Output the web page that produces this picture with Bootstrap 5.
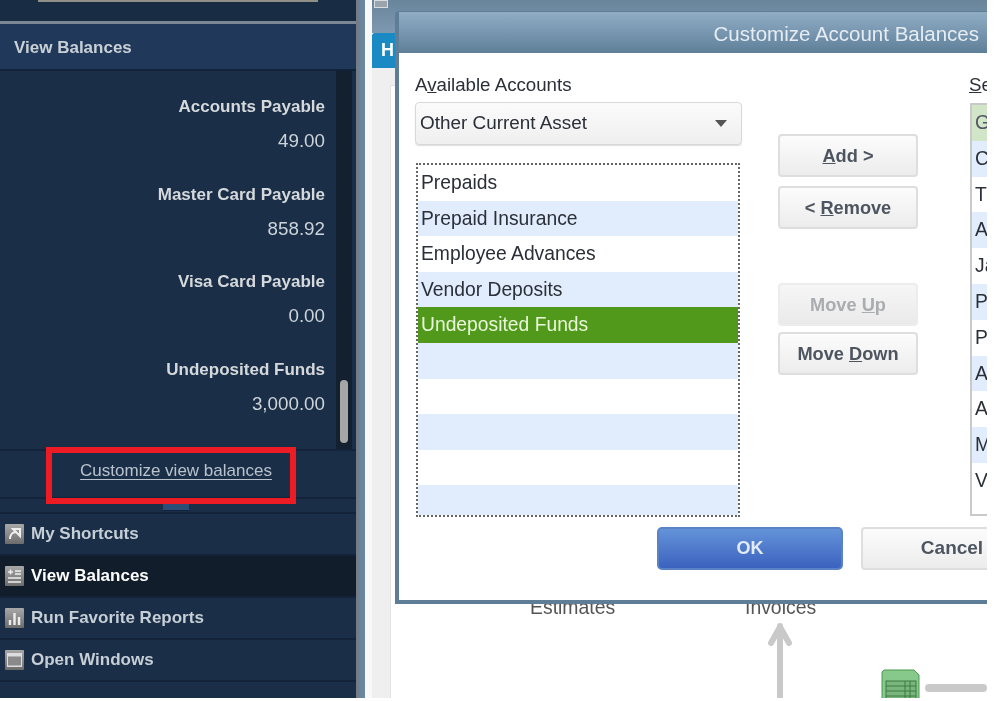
<!DOCTYPE html>
<html lang="en"><head><meta charset="utf-8"><title>Customize Account Balances</title>
<link href="https://cdn.jsdelivr.net/npm/bootstrap@5.3.0/dist/css/bootstrap.min.css" rel="stylesheet">
<style>
html,body{margin:0;background:#fff;height:100%;overflow:hidden}
body{font-family:"Liberation Sans",Arial,sans-serif}
.qb-app{width:987px;height:698px;position:relative;overflow:hidden;background:#fff;filter:blur(.45px)}
.qb-side{width:356px;background:#1a2e47;color:#d3d9df}
.qb-topstrip{height:21px;background:#182c44}
.qb-search{height:2px;margin:0 38px;background:#8f8f88}
.qb-rule{height:3px;background:#7b8795}
.qb-head{height:47px;background:#20385a;border-bottom:2px solid #13243a;font-size:17px;font-weight:700;padding:2px 0 0 14px;color:#c9d0d6}
.qb-scrollarea{height:380px;border-bottom:2px solid #12233a}
.qb-items{width:336px;padding:26px 11px 0 0}
.qb-item{text-align:right;height:87.5px}
.qb-label{font-weight:700;font-size:17px;line-height:20px;color:#d5d9dc}
.qb-val{font-size:18.8px;line-height:20px;margin-top:14px;color:#ccd3d9}
.qb-track{width:16px;background:#13202f;position:relative}
.qb-thumb{position:absolute;left:4px;top:309px;width:8px;height:63px;background:#a5a6a6;border-radius:4px}
.qb-foot{height:46px;font-size:17px;padding:0 4px 6px 0}
.qb-foot a{color:#b9c3ce;text-decoration-thickness:1px;text-underline-offset:3px}
.qb-line{height:2px;background:#12233a}
.qb-split{height:15px;background:#1a2e47;border-bottom:2px solid #12233a;padding-right:4px}
.qb-grip{width:26px;height:12px;background:#2c4d75;margin:0 auto;border-bottom:1px solid #10233c}
.qb-nav{height:42px;border-bottom:2px solid #12233a;padding-left:5px;gap:7px;font-weight:700;font-size:17px;color:#c6ced6}
.qb-nav.qb-on{background:#111d2b;color:#fff}
.qb-ico{width:19px;height:21px;flex:none;display:block}
.qb-gap{width:9px;background:linear-gradient(90deg,#75797f,#6b8299 40%,#6a8aa5)}
.qb-white{width:7px;background:#f8f8f8}
.qb-main{flex:1;background:#efefef;position:relative}
.qb-bar{height:33px;background:linear-gradient(#68859c,#7c99b1)}
.qb-tinybox{position:absolute;left:2px;top:0;width:14px;height:8px;background:#9aa4ad;border:1px solid #d9dde0}
.qb-tab{width:70px;height:35px;background:#1a8ac5;color:#fff;font-weight:700;font-size:18px;line-height:35px;padding-left:9px;border-radius:3px 3px 0 0}
.qb-panel{position:absolute;left:18px;top:85px;right:0;bottom:0;background:#fff;border-left:1px solid #e3e3e3;border-top:1px solid #e3e3e3}
.qb-flow{position:absolute;font-size:19.4px;color:#555;top:593px;white-space:nowrap}
.qb-arrow{position:absolute;left:766px;top:622px}
.qb-sheet{position:absolute;left:881px;top:669px}
.qb-hbar{position:absolute;left:925px;top:684px;width:62px;height:8px;background:#c9c9c9;border-radius:4px}
.qb-dialog{position:absolute;left:395px;top:11px;width:592px;height:593px;background:#fff;border:solid #5e7e98;border-width:1px 0 4px 4px;border-radius:4px 0 0 0;overflow:hidden}
.qb-title{height:41px;background:linear-gradient(#90adc5,#5f7f99);color:#e6edf2;font-size:20.5px;line-height:44px;text-align:right;padding-right:8px;white-space:nowrap}
.qb-body{padding:20px 0 0 16px;gap:36px;height:470px;width:640px;font-size:18.7px;color:#2a2f38}
.qb-left{width:327px;flex:none}
.qb-cap{line-height:24px;height:29px;white-space:nowrap}
.qb-select{width:327px;height:43px;border:1px solid #d8d8d8;border-radius:4px;background:linear-gradient(#fbfbfb,#efefef);padding:0 4px;box-shadow:0 1px 1px #ddd;font-size:18.9px}
.qb-caret{width:0;height:0;border:6px solid transparent;border-top:7px solid #555;border-bottom:0;margin-right:10px}
.qb-list{width:324px;margin-top:18px;margin-left:1px;border:2px dotted #666;border-radius:0;height:354px;overflow:hidden;font-size:19.3px}
.qb-row{height:35.6px;flex:none;border:0;padding:0 0 0 3px;line-height:35.6px;border-radius:0!important;background:#fff;color:#2a2f38;white-space:nowrap}
.qb-row:nth-child(even){background:#e1edfd}
.qb-row.qb-sel{background:#50991a;color:#eaf7dd}
.qb-btns{width:140px;flex:none;padding-top:61px}
.qb-btn{width:140px;height:43px;padding:0;border:2px solid #dedede;border-radius:4px;background:linear-gradient(#fcfcfc,#ececec);font-weight:700;font-size:18.2px;color:#4d5560;display:block;line-height:38px;white-space:nowrap}
.qb-btn:disabled{opacity:1;color:#a9acb0;border-color:#ececec;background:linear-gradient(#f6f6f6,#eaeaea)}
.qb-btn-r{margin-top:9px}
.qb-btn-u{margin-top:54px}
.qb-btn-d{margin-top:6px}
.qb-right{width:60px;flex:none;margin-left:15px}
.qb-rlist{width:60px;height:413px;margin:1px 0 0 1px;border:2px solid #c9c9c9;border-right:0;overflow:hidden;font-size:19.3px}
.qb-rrow{height:35.8px;line-height:35.8px;padding-left:3px;background:#fff;color:#2a2f38;white-space:nowrap;overflow:hidden}
.qb-rrow:nth-child(even){background:#e1edfd}
.qb-rrow:first-child{background:#d1e5c9;color:#556}
.qb-ok{position:absolute;left:258px;top:515px;width:186px;height:43px;background:linear-gradient(#6493d8,#3b62bf);border:2px solid #5a83c7;border-radius:5px;color:#e2ebf7;font-weight:700;font-size:18px;padding:0}
.qb-cancel{position:absolute;left:462px;top:515px;width:182px;height:43px;border:2px solid #dedede;border-radius:4px;background:linear-gradient(#fcfcfc,#ececec);color:#4d5560;font-weight:700;font-size:19px;padding:0}
.qb-redbox{position:absolute;left:46px;top:447px;width:250px;height:57px;border:6px solid #ed1c24}
</style></head>
<body>
<div class="qb-app d-flex">
  <aside class="qb-side d-flex flex-column">
    <div class="qb-topstrip"><div class="qb-search"></div></div>
    <div class="qb-rule"></div>
    <div class="qb-head d-flex align-items-center">View Balances</div>
    <div class="qb-scrollarea d-flex">
      <div class="qb-items">
        <div class="qb-item"><div class="qb-label">Accounts Payable</div><div class="qb-val">49.00</div></div>
        <div class="qb-item"><div class="qb-label">Master Card Payable</div><div class="qb-val">858.92</div></div>
        <div class="qb-item"><div class="qb-label">Visa Card Payable</div><div class="qb-val">0.00</div></div>
        <div class="qb-item"><div class="qb-label">Undeposited Funds</div><div class="qb-val">3,000.00</div></div>
      </div>
      <div class="qb-track"><div class="qb-thumb"></div></div>
    </div>
    <div class="qb-foot d-flex align-items-center justify-content-center"><a href="#">Customize view balances</a></div>
    <div class="qb-line"></div>
    <div class="qb-split"><div class="qb-grip"></div></div>
    <div class="qb-nav d-flex align-items-center">
      <svg class="qb-ico" viewBox="0 0 19 21"><defs><linearGradient id="g" x1="0" y1="0" x2="0" y2="1"><stop offset="0" stop-color="#a8a8a8"/><stop offset="1" stop-color="#6c6c6c"/></linearGradient></defs><rect width="19" height="20" rx="1" fill="url(#g)"/><path d="M5 15 C5 10 8 8 11 8 M8 5h7v7l-2.5-2.5L8 5z" fill="none" stroke="#eee" stroke-width="2"/></svg>
      <span>My Shortcuts</span></div>
    <div class="qb-nav qb-on d-flex align-items-center">
      <svg class="qb-ico" viewBox="0 0 19 21"><rect width="19" height="20" rx="1" fill="url(#g)"/><path d="M3 6h5M5.500 3.500v5M10 5h6M10 8h6M3 12h13M3 16h13" stroke="#eee" stroke-width="1.400"/></svg>
      <span>View Balances</span></div>
    <div class="qb-nav d-flex align-items-center">
      <svg class="qb-ico" viewBox="0 0 19 21"><rect width="19" height="20" rx="1" fill="url(#g)"/><path d="M5 17v-5M9.500 17V5M14 17V9" stroke="#eee" stroke-width="2.400"/></svg>
      <span>Run Favorite Reports</span></div>
    <div class="qb-nav d-flex align-items-center">
      <svg class="qb-ico" viewBox="0 0 19 21"><rect width="19" height="20" rx="1" fill="url(#g)"/><rect x="2" y="3" width="15" height="14" fill="#ddd"/><rect x="3" y="6.500" width="13" height="9" fill="#8a8a8a"/></svg>
      <span>Open Windows</span></div>
  </aside>
  <div class="qb-gap"></div>
  <div class="qb-white"></div>
  <main class="qb-main">
    <div class="qb-bar"></div><div class="qb-tinybox"></div>
    <div class="qb-tab">H</div>
    <div class="qb-panel"></div>
  </main>
  <div class="qb-flow" style="left:530px">Estimates</div>
  <div class="qb-flow" style="left:745px">Invoices</div>
  <svg class="qb-arrow" width="28" height="78" viewBox="0 0 28 78"><path d="M14 4v74M5 21 14 5l9 16" fill="none" stroke="#c9c9c9" stroke-width="6" stroke-linejoin="round" stroke-linecap="round"/></svg>
  <svg class="qb-sheet" width="40" height="32" viewBox="0 0 40 32"><path d="M3 1h30l5 5v26H1V3z" fill="#86c98a" stroke="#4b9a50"/><rect x="5" y="12" width="30" height="20" fill="#79b57c" stroke="#3d7a42"/><path d="M5 17h30M5 22h30M5 27h30M24 12v20M29 12v20" stroke="#3d7a42"/></svg>
  <div class="qb-hbar"></div>

  <section class="qb-dialog">
    <div class="qb-title">Customize Account Balances</div>
    <div class="qb-body d-flex">
      <div class="qb-left">
        <div class="qb-cap">A<u>v</u>ailable Accounts</div>
        <div class="qb-select d-flex align-items-center justify-content-between"><span>Other Current Asset</span><span class="qb-caret"></span></div>
        <div class="list-group qb-list">
          <div class="list-group-item qb-row">Prepaids</div>
          <div class="list-group-item qb-row">Prepaid Insurance</div>
          <div class="list-group-item qb-row">Employee Advances</div>
          <div class="list-group-item qb-row">Vendor Deposits</div>
          <div class="list-group-item qb-row qb-sel">Undeposited Funds</div>
          <div class="list-group-item qb-row">&nbsp;</div>
          <div class="list-group-item qb-row">&nbsp;</div>
          <div class="list-group-item qb-row">&nbsp;</div>
          <div class="list-group-item qb-row">&nbsp;</div>
          <div class="list-group-item qb-row">&nbsp;</div>
        </div>
      </div>
      <div class="qb-btns">
        <button class="btn qb-btn"><u>A</u>dd &gt;</button>
        <button class="btn qb-btn qb-btn-r">&lt; <u>R</u>emove</button>
        <button class="btn qb-btn qb-btn-u" disabled>Move <u>U</u>p</button>
        <button class="btn qb-btn qb-btn-d">Move <u>D</u>own</button>
      </div>
      <div class="qb-right">
        <div class="qb-cap"><u>S</u>elected Accounts</div>
        <div class="qb-rlist">
          <div class="qb-rrow">G</div><div class="qb-rrow">C</div><div class="qb-rrow">T</div><div class="qb-rrow">A</div><div class="qb-rrow">Ja</div><div class="qb-rrow">P</div><div class="qb-rrow">P</div><div class="qb-rrow">A</div><div class="qb-rrow">A</div><div class="qb-rrow">M</div><div class="qb-rrow">V</div>
        </div>
      </div>
    </div>
    <button class="btn qb-ok">OK</button>
    <button class="btn qb-cancel">Cancel</button>
  </section>
  <div class="qb-redbox"></div>
</div>
<script src="https://cdn.jsdelivr.net/npm/bootstrap@5.3.0/dist/js/bootstrap.bundle.min.js"></script>
</body></html>
